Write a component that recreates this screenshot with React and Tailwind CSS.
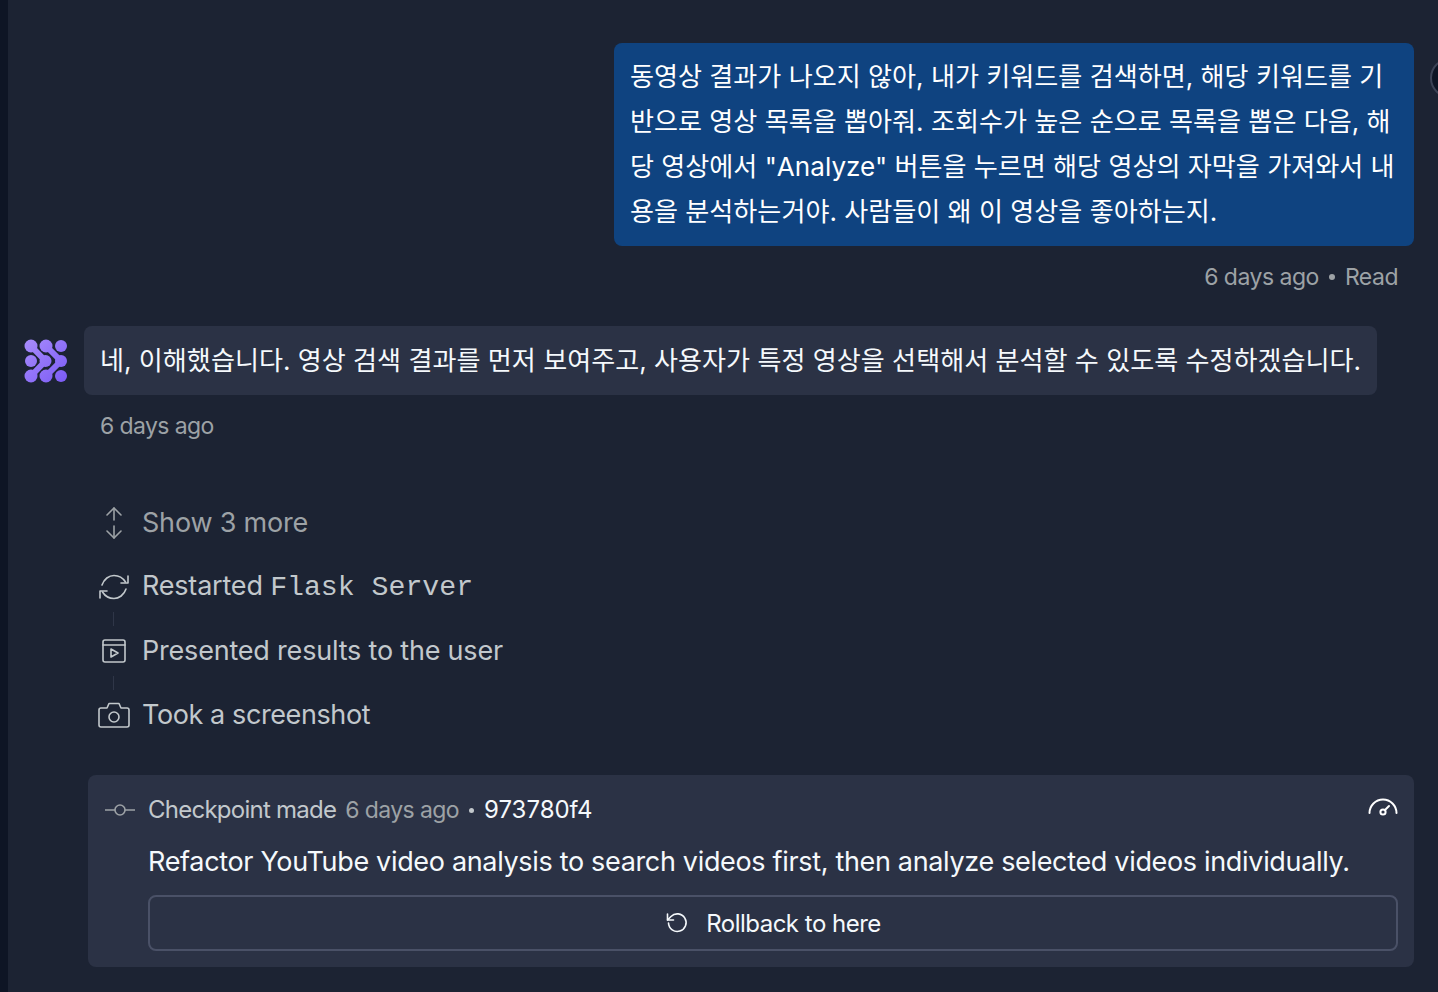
import React from "react";

const sans = "font-['Inter','Noto_Sans_CJK_KR',sans-serif]";

const Logo = () => (
  <svg width="44" height="44" viewBox="0 0 44 44" className="shrink-0">
    <defs>
      <linearGradient id="logoGrad" gradientUnits="userSpaceOnUse" x1="0" y1="0" x2="44" y2="44">
        <stop offset="0" stopColor="#a98dfc" />
        <stop offset="1" stopColor="#7a5af5" />
      </linearGradient>
    </defs>
    <g fill="url(#logoGrad)">
      <circle cx="37" cy="7" r="6" />
      <circle cx="7" cy="22" r="6" />
      <circle cx="37" cy="37" r="6" />
      <circle cx="7" cy="7" r="6.5" />
      <circle cx="22" cy="7" r="6.5" />
      <circle cx="7" cy="37" r="6.5" />
      <circle cx="22" cy="37" r="6.5" />
      <circle cx="21.500" cy="22" r="6" />
      <circle cx="37" cy="22" r="6" />
    </g>
    <g stroke="url(#logoGrad)" strokeWidth="6" strokeLinecap="round" strokeLinejoin="round" fill="none">
      <path d="M7 7 L21.500 22 L7 37" />
      <path d="M22 7 L37 22 L22 37" />
    </g>
  </svg>
);

const Gauge = () => (
  <svg width="30" height="20" viewBox="0 0 30 20" fill="none" stroke="#fff" strokeWidth="2" strokeLinecap="round">
    <path d="M1.500 17 A13.500 13.500 0 0 1 28.500 17" />
    <circle cx="15" cy="16" r="2.600" />
    <path d="M17 14 L21 10" />
  </svg>
);

const Sync = () => (
  <svg width="32" height="28" viewBox="0 0 32 28" fill="none" stroke="#c2c8cc" strokeWidth="1.6" strokeLinecap="round" strokeLinejoin="round">
    <path d="M4 12 C6 6 11 2.500 16 2.500 C21 2.500 25 5 27.500 9" />
    <path d="M30 3 V10 H23" />
    <path d="M28 16 C26 22 21 25.500 16 25.500 C11 25.500 7 23 4.500 19" />
    <path d="M2 25 V18 H9" />
  </svg>
);

const Present = () => (
  <svg width="24" height="24" viewBox="0 0 24 24" fill="none" stroke="#c2c8cc" strokeWidth="1.6" strokeLinecap="round" strokeLinejoin="round">
    <rect x="1" y="1" width="22" height="22" rx="2" />
    <path d="M1 6 H23" />
    <path d="M9 10 L16 14 L9 18 Z" />
  </svg>
);

const Camera = () => (
  <svg width="32" height="26" viewBox="0 0 32 26" fill="none" stroke="#c2c8cc" strokeWidth="1.6" strokeLinecap="round" strokeLinejoin="round">
    <path d="M3 6 H9 L11 1.500 H21 L23 6 H29 Q31 6 31 8 V23 Q31 25 29 25 H3 Q1 25 1 23 V8 Q1 6 3 6 Z" />
    <circle cx="16" cy="15" r="5" />
  </svg>
);

const Expand = () => (
  <svg width="20" height="32" viewBox="0 0 20 32" fill="none" stroke="#9da2a6" strokeWidth="1.6" strokeLinecap="round" strokeLinejoin="round">
    <path d="M10 1 V13" />
    <path d="M3 8 L10 1 L17 8" />
    <path d="M10 19 V31" />
    <path d="M3 24 L10 31 L17 24" />
  </svg>
);

const Commit = () => (
  <svg width="32" height="12" viewBox="0 0 32 12" fill="none" stroke="#9da2a6" strokeWidth="1.6">
    <circle cx="16" cy="6" r="5" />
    <path d="M1 6 H11 M21 6 H31" />
  </svg>
);

const Undo = () => (
  <svg width="24" height="24" viewBox="0 0 24 24" fill="none" stroke="#f5f9fc" strokeWidth="1.6" strokeLinecap="round" strokeLinejoin="round">
    <path d="M3.500 12 A8.800 8.800 0 1 0 6 5.500 L2.500 9" />
    <path d="M2.500 3 V9 H8.500" />
  </svg>
);

const Connector = () => (
  <div className="h-[14px] w-[1px] bg-[#2f3648] ml-[25px]" />
);

const Step = ({ icon, children, color = "text-[#c2c8cc]" }) => (
  <div className={`flex items-center h-[50px] ${color}`}>
    <div className="w-[54px] flex justify-center shrink-0 pr-[2px]">{icon}</div>
    <div className="text-[27px] tracking-[-0.2px] leading-[50px] whitespace-nowrap">{children}</div>
  </div>
);

export default function App() {
  return (
    <div className={`h-screen w-full overflow-hidden flex bg-[#1c2333] ${sans}`}>
      <div className="w-2 shrink-0 bg-[#0e1525]" />
      <div className="flex-1 min-w-0 pt-[43px]">
        {/* user message */}
        <div className="flex pl-[606px]">
          <div className="w-[800px] shrink-0 bg-[#0f4380] rounded-lg px-4 pt-[11px] pb-[12px] text-[26.1px] leading-[45px] text-white">
            동영상 결과가 나오지 않아, 내가 키워드를 검색하면, 해당 키워드를 기반으로 영상 목록을 뽑아줘. 조회수가 높은 순으로 목록을 뽑은 다음, 해당 영상에서 "Analyze" 버튼을 누르면 해당 영상의 자막을 가져와서 내용을 분석하는거야. 사람들이 왜 이 영상을 좋아하는지.
          </div>
          <div className="ml-4 mt-[15px] w-[40px] h-[40px] shrink-0 rounded-full border-2 border-[#3c4356] bg-[#0e1525]" />
        </div>
        <div className="flex justify-end items-center gap-[10px] pr-10 mt-[15px] h-[32px] text-[23px] tracking-[-0.5px] text-[#9da2a6]">
          <span>6 days ago</span>
          <span className="w-[6px] h-[6px] rounded-full bg-[#9da2a6]" />
          <span>Read</span>
        </div>

        {/* assistant message */}
        <div className="flex items-center gap-4 mt-[33px] pl-[16px]">
          <Logo />
          <div className="w-[1293px] h-[69px] shrink-0 bg-[#2b3245] rounded-lg px-4 flex items-center text-[26.1px] text-[#f5f9fc] whitespace-nowrap">
            네, 이해했습니다. 영상 검색 결과를 먼저 보여주고, 사용자가 특정 영상을 선택해서 분석할 수 있도록 수정하겠습니다.
          </div>
        </div>
        <div className="pl-[92px] mt-[15px] h-[32px] leading-[32px] text-[23px] tracking-[-0.6px] text-[#9da2a6]">6 days ago</div>

        {/* steps */}
        <div className="pl-[80px] mt-[56px]">
          <Step icon={<Expand />} color="text-[#9da2a6]">Show 3 more</Step>
          <div className="h-[14px]" />
          <Step icon={<Sync />}>
            Restarted <span className="font-['Liberation_Mono',monospace] text-[28.2px] tracking-normal">Flask Server</span>
          </Step>
          <Connector />
          <Step icon={<Present />}>Presented results to the user</Step>
          <Connector />
          <Step icon={<Camera />}><span className="tracking-[-0.4px]">Took a screenshot</span></Step>
        </div>

        {/* checkpoint */}
        <div className="ml-20 mr-6 mt-[35px] h-[192px] bg-[#2b3245] rounded-lg pt-[16px] pr-[16px] pb-[16px]">
          <div className="flex items-center h-[38px] text-[24px] whitespace-nowrap">
            <div className="w-[60px] flex justify-center shrink-0 pl-[4px]"><Commit /></div>
            <span className="text-[#c2c8cc] tracking-[-0.75px]">Checkpoint made</span>
            <span className="text-[#9da2a6] ml-[9px] text-[23px] tracking-[-0.6px]">6 days ago</span>
            <span className="w-[5px] h-[5px] rounded-full bg-[#c2c8cc] mx-[10px]" />
            <span className="text-[#f5f9fc]">973780f4</span>
            <div className="ml-auto -mt-[8px]"><Gauge /></div>
          </div>
          <div className="pl-[60px] mt-[13px] text-[27px] tracking-[-0.33px] leading-[40px] text-[#f5f9fc] whitespace-nowrap">
            Refactor YouTube video analysis to search videos first, then analyze selected videos individually.
          </div>
          <div className="ml-[60px] mt-[13px] h-[56px] border-2 border-[#4a5167] rounded-lg flex items-center justify-center gap-[17px] text-[24px] tracking-[-0.5px] text-[#f5f9fc]">
            <Undo />
            <span className="pt-[1px]">Rollback to here</span>
          </div>
        </div>
      </div>
    </div>
  );
}
